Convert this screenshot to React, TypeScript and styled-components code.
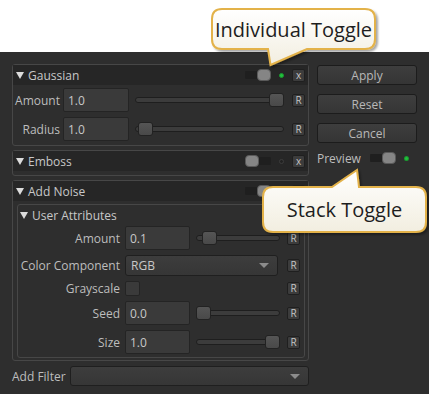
import React from 'react';
import styled, { createGlobalStyle } from 'styled-components';

const GlobalStyle = createGlobalStyle`
  html, body { margin: 0; padding: 0; background: #fff; }
  body { font-family: "Open Sans", "Liberation Sans", sans-serif; font-size: 12px; }
`;

const Page = styled.div`
  position: relative;
  width: 429px;
  height: 394px;
  overflow: hidden;
  padding-top: 52px;
  box-sizing: border-box;
  background: #fff;
`;

const Panel = styled.div`
  height: 342px;
  box-sizing: border-box;
  background: #2e2e2e;
  padding: 12px 0 0 12px;
  display: flex;
  gap: 8px;
  color: #bdbdbd;
`;

const LeftCol = styled.div`
  width: 297px;
  display: flex;
  flex-direction: column;
  gap: 4px;
`;

const RightCol = styled.div`
  width: 100px;
  margin-top: 1px;
  display: flex;
  flex-direction: column;
  gap: 9px;
`;

const Section = styled.div<{ $pb?: number }>`
  border: 1px solid #474747;
  border-radius: 3px;
  padding-bottom: ${p => p.$pb ?? 4}px;
  display: flex;
  flex-direction: column;
`;

const Header = styled.div`
  height: 20px;
  background: #262626;
  display: flex;
  align-items: center;
  padding: 0 3px 0 3px;
  color: #c8c8c8;
`;

const Caret = styled.span`
  width: 0;
  height: 0;
  border-left: 4px solid transparent;
  border-right: 4px solid transparent;
  border-top: 7px solid #dcdcdc;
  margin-right: 4px;
`;

const Title = styled.span`
  flex: 1;
`;

const ToggleTrack = styled.div<{ $on: boolean; $w?: number }>`
  width: ${p => p.$w ?? 26}px;
  height: 12px;
  display: flex;
  justify-content: ${p => (p.$on ? 'flex-end' : 'flex-start')};
  background: linear-gradient(#1f1f1f, #1f1f1f) center / 100% 8px no-repeat;
  border-radius: 4px;
`;

const Knob = styled.div`
  width: 14px;
  height: 12px;
  box-sizing: border-box;
  border-radius: 4px;
  background: #858585;
  border: 1px solid #5a5a5a;
`;

const Dot = styled.div<{ $on: boolean }>`
  width: 5px;
  height: 5px;
  border-radius: 50%;
  margin: 0 8px 0 8px;
  box-sizing: border-box;
  background: ${p => (p.$on ? '#22c03c' : '#222')};
  border: 1px solid ${p => (p.$on ? '#1a9a30' : '#3c3c3c')};
`;

const SmallBtn = styled.div`
  width: 13px;
  height: 13px;
  box-sizing: border-box;
  border: 1px solid #1f1f1f;
  border-radius: 2px;
  background: #3c3c3c;
  color: #c4c4c4;
  font-size: 10px;
  line-height: 11px;
  text-align: center;
`;

const Row = styled.div<{ $h?: number }>`
  height: ${p => p.$h ?? 24}px;
  display: flex;
  align-items: center;
`;

const Body = styled.div<{ $pt?: number }>`
  display: flex;
  flex-direction: column;
  gap: 5px;
  padding-top: ${p => p.$pt ?? 3}px;
`;

const Label = styled.div<{ $w: number; $mr: number }>`
  width: ${p => p.$w}px;
  margin-right: ${p => p.$mr}px;
  text-align: right;
  white-space: nowrap;
  color: #bdbdbd;
`;

const Field = styled.div<{ $w: number }>`
  width: ${p => p.$w}px;
  height: 24px;
  box-sizing: border-box;
  background: #3a3a3a;
  border: 1px solid #242424;
  border-radius: 2px;
  padding-left: 4px;
  display: flex;
  align-items: center;
  color: #c8c8c8;
`;

const Slider = styled.div<{ $w: number; $ml: number; $mr: number }>`
  position: relative;
  width: ${p => p.$w}px;
  height: 14px;
  margin: 0 ${p => p.$mr}px 0 ${p => p.$ml}px;
  display: flex;
  align-items: center;
`;

const Track = styled.div`
  width: 100%;
  height: 6px;
  box-sizing: border-box;
  background: #3c3c3c;
  border: 1px solid #1e1e1e;
  border-radius: 3px;
`;

const Thumb = styled.div`
  position: absolute;
  top: 0;
  width: 15px;
  height: 14px;
  box-sizing: border-box;
  background: linear-gradient(#555, #494949);
  border: 1px solid #222;
  border-radius: 3px;
`;

const Combo = styled.div<{ $w: number; $h?: number }>`
  width: ${p => p.$w}px;
  height: ${p => p.$h ?? 21}px;
  box-sizing: border-box;
  background: linear-gradient(#3d3d3d, #363636);
  border: 1px solid #1f1f1f;
  border-radius: 3px;
  padding: 0 8px 0 5px;
  display: flex;
  align-items: center;
  color: #c8c8c8;
`;

const ComboText = styled.span`
  flex: 1;
`;

const Arrow = styled.span`
  width: 0;
  height: 0;
  border-left: 5px solid transparent;
  border-right: 5px solid transparent;
  border-top: 5px solid #8c8c8c;
`;

const Check = styled.div`
  width: 15px;
  height: 15px;
  box-sizing: border-box;
  background: #3a3a3a;
  border: 1px solid #242424;
  border-radius: 2px;
`;

const Spacer = styled.div<{ $w: number }>`
  width: ${p => p.$w}px;
`;

const Inner = styled.div`
  margin: 3px 3px 0 4px;
  border: 1px solid #474747;
  border-radius: 3px;
  padding-bottom: 3px;
  display: flex;
  flex-direction: column;
`;

const InnerHeader = styled.div`
  height: 20px;
  display: flex;
  align-items: center;
  padding-left: 2px;
  color: #c8c8c8;
`;

const FilterRow = styled.div`
  margin-top: 1px;
  height: 20px;
  display: flex;
  align-items: center;
`;

const FilterLabel = styled.span`
  width: 58px;
  color: #bdbdbd;
`;

const Button = styled.div`
  height: 20px;
  box-sizing: border-box;
  background: linear-gradient(#3e3e3e, #353535);
  border: 1px solid #1c1c1c;
  border-radius: 3px;
  color: #b8b8b8;
  display: flex;
  align-items: center;
  justify-content: center;
`;

const PreviewRow = styled.div`
  margin-top: -2px;
  height: 16px;
  display: flex;
  align-items: center;
`;

const PreviewLabel = styled.span`
  width: 57px;
  color: #bdbdbd;
`;

const CalloutBox = styled.div<{ $x: number; $y: number; $w: number; $h: number }>`
  position: absolute;
  left: ${p => p.$x}px;
  top: ${p => p.$y}px;
  width: ${p => p.$w}px;
  height: ${p => p.$h}px;
  svg { position: absolute; left: 0; top: 0; overflow: visible; }
`;

const CalloutText = styled.div<{ $x: number; $y: number; $w: number; $h: number; $size: number }>`
  position: absolute;
  left: ${p => p.$x}px;
  top: ${p => p.$y}px;
  width: ${p => p.$w}px;
  height: ${p => p.$h}px;
  display: flex;
  align-items: center;
  justify-content: center;
  font-size: ${p => p.$size}px;
  color: #1e1e1e;
  white-space: nowrap;
`;

function Toggle({ on, w }: { on: boolean; w?: number }) {
  return (
    <ToggleTrack $on={on} $w={w}>
      <Knob />
    </ToggleTrack>
  );
}

function SectionHeader({ title, on, live }: { title: string; on: boolean; live: boolean }) {
  return (
    <Header>
      <Caret />
      <Title>{title}</Title>
      <Toggle on={on} />
      <Dot $on={live} />
      <SmallBtn>x</SmallBtn>
    </Header>
  );
}

type P = { label: string; value: string; pos: number };

function SliderBox({ w, ml, mr, pos }: { w: number; ml: number; mr: number; pos: number }) {
  return (
    <Slider $w={w} $ml={ml} $mr={mr}>
      <Track />
      <Thumb style={{ left: pos * (w - 15) }} />
    </Slider>
  );
}

function OuterParam({ label, value, pos }: P) {
  return (
    <Row>
      <Label $w={47} $mr={3}>{label}</Label>
      <Field $w={66}>{value}</Field>
      <SliderBox w={149} ml={6} mr={8} pos={pos} />
      <SmallBtn>R</SmallBtn>
    </Row>
  );
}

function InnerParam({ label, value, pos }: P) {
  return (
    <Row>
      <Label $w={102} $mr={5}>{label}</Label>
      <Field $w={65}>{value}</Field>
      <SliderBox w={84} ml={6} mr={7} pos={pos} />
      <SmallBtn>R</SmallBtn>
    </Row>
  );
}

function Bubble({ d, id }: { d: string; id: string }) {
  return (
    <svg width="100%" height="100%">
      <defs>
        <linearGradient id={id} x1="0" y1="0" x2="0" y2="1">
          <stop offset="0" stopColor="#ffffff" />
          <stop offset="1" stopColor="#f2eee0" />
        </linearGradient>
        <filter id={id + 's'} x="-10%" y="-10%" width="130%" height="140%">
          <feDropShadow dx="2" dy="2" stdDeviation="1" floodColor="#000" floodOpacity="0.35" />
        </filter>
      </defs>
      <path d={d} fill={`url(#${id})`} stroke="#e3b24a" strokeWidth="2" filter={`url(#${id + 's'})`} />
    </svg>
  );
}

export default function App() {
  return (
    <Page>
      <GlobalStyle />
      <Panel>
        <LeftCol>
          <Section>
            <SectionHeader title="Gaussian" on live />
            <Body>
              <OuterParam label="Amount" value="1.0" pos={1} />
              <OuterParam label="Radius" value="1.0" pos={0.02} />
            </Body>
          </Section>
          <Section>
            <SectionHeader title="Emboss" on={false} live={false} />
          </Section>
          <Section $pb={2}>
            <SectionHeader title="Add Noise" on live />
            <Inner>
              <InnerHeader>
                <Caret />
                <Title>User Attributes</Title>
              </InnerHeader>
              <Body $pt={1}>
                <InnerParam label="Amount" value="0.1" pos={0.08} />
                <Row $h={21}>
                  <Label $w={102} $mr={5}>Color Component</Label>
                  <Combo $w={153}>
                    <ComboText>RGB</ComboText>
                    <Arrow />
                  </Combo>
                  <Spacer $w={9} />
                  <SmallBtn>R</SmallBtn>
                </Row>
                <Row $h={15}>
                  <Label $w={102} $mr={5}>Grayscale</Label>
                  <Check />
                  <Spacer $w={147} />
                  <SmallBtn>R</SmallBtn>
                </Row>
                <InnerParam label="Seed" value="0.0" pos={0} />
                <InnerParam label="Size" value="1.0" pos={1} />
              </Body>
            </Inner>
          </Section>
          <FilterRow>
            <FilterLabel>Add Filter</FilterLabel>
            <Combo $w={239} $h={20}>
              <ComboText />
              <Arrow />
            </Combo>
          </FilterRow>
        </LeftCol>
        <RightCol>
          <Button>Apply</Button>
          <Button>Reset</Button>
          <Button>Cancel</Button>
          <PreviewRow>
            <PreviewLabel>Preview</PreviewLabel>
            <Toggle on w={28} />
            <Dot $on />
          </PreviewRow>
        </RightCol>
      </Panel>

      <CalloutBox $x={205} $y={5} $w={180} $h={65}>
        <Bubble id="cb1" d="M17 4 H160 Q170 4 170 14 V34 Q170 44 160 44 H102 L65.5 60 L63 44 H17 Q7 44 7 34 V14 Q7 4 17 4 Z" />
        <CalloutText $x={7} $y={4} $w={163} $h={40} $size={20}>Individual Toggle</CalloutText>
      </CalloutBox>
      <CalloutBox $x={255} $y={165} $w={174} $h={75}>
        <Bubble id="cb2" d="M18 22 H77 L102 5 L104 22 H161 Q171 22 171 32 V57 Q171 67 161 67 H18 Q8 67 8 57 V32 Q8 22 18 22 Z" />
        <CalloutText $x={8} $y={22} $w={163} $h={45} $size={20}>Stack Toggle</CalloutText>
      </CalloutBox>
    </Page>
  );
}
